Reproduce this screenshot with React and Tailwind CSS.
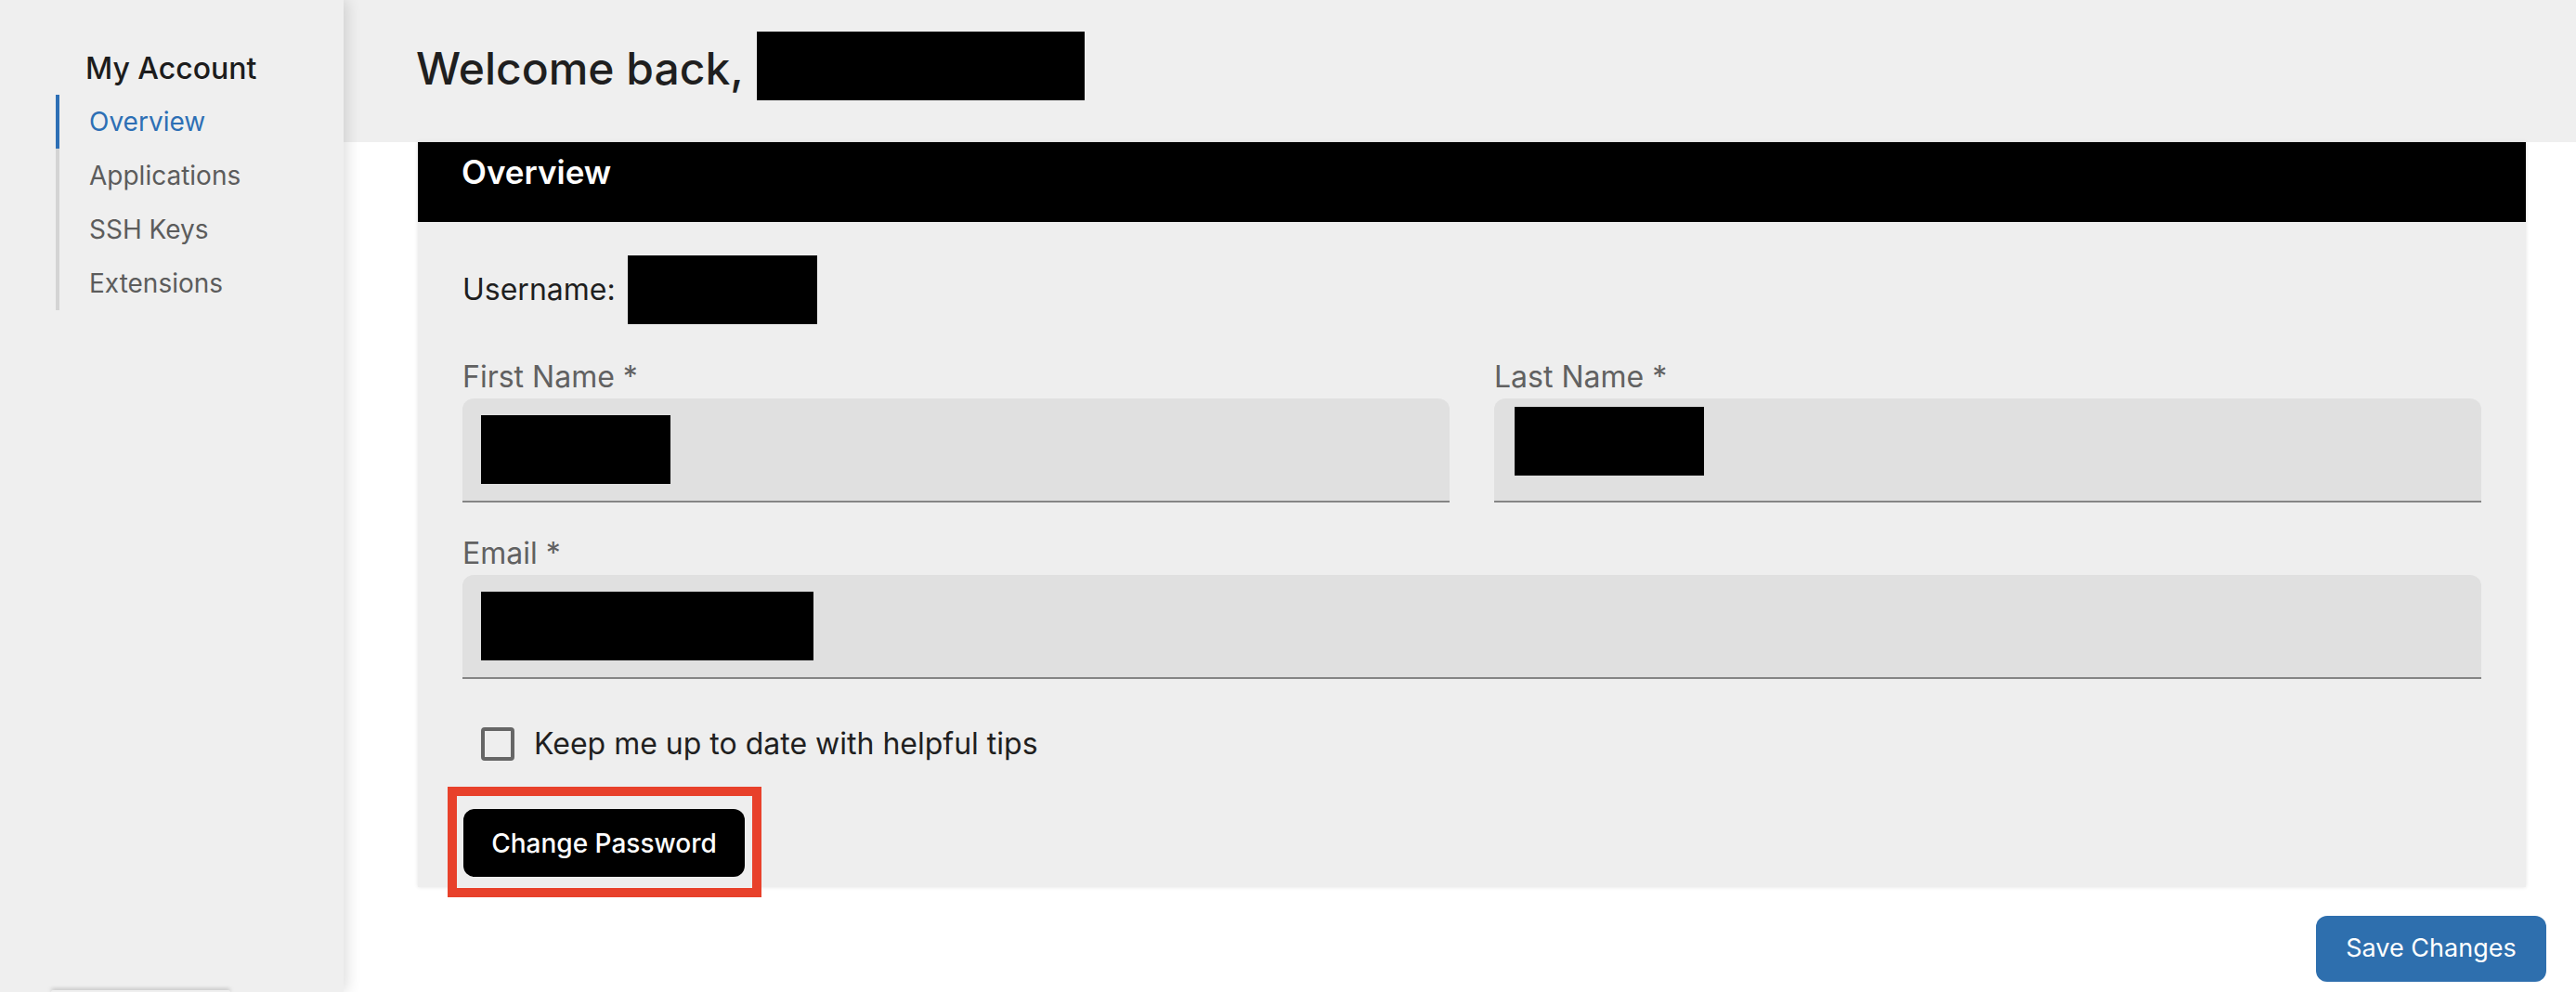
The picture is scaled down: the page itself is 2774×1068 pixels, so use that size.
export default function App() {
  const navItems = ['Overview', 'Applications', 'SSH Keys', 'Extensions'];

  return (
    <div className="flex min-h-screen bg-white font-['Inter',sans-serif]">
      {/* Sidebar */}
      <aside className="relative z-10 flex w-[370px] shrink-0 flex-col bg-[#efefef] pl-[60px] shadow-[4px_0_14px_rgba(0,0,0,0.13)]">
        <h2 className="mt-[54px] ml-[32px] text-[32px] font-medium leading-[40px] text-[#1c1c1c]">My Account</h2>
        <nav className="mt-[8px] flex flex-col border-l-4 border-[#d4d4d4]">
          {navItems.map((item, i) => (
            <a
              key={item}
              className={`flex h-[58px] items-center text-[28px] leading-[34px] ${
                i === 0
                  ? '-ml-[4px] border-l-4 border-[#2d6fb5] pl-[32px] text-[#2d6fb5]'
                  : 'pl-[32px] text-[#5c5c5c]'
              }`}
            >
              {item}
            </a>
          ))}
        </nav>
        <div className="flex-1" />
        <div className="-ml-[5px] h-[2px] w-[193px] rounded-t bg-[#efefef] shadow-[0_-1px_4px_rgba(0,0,0,0.35)]" />
      </aside>

      {/* Main */}
      <main className="flex flex-1 flex-col">
        <header className="h-[153px] bg-[#efefef] pl-[78px]">
          <div className="flex items-start pt-[34px]">
            <h1 className="mt-[11px] text-[48px] font-medium leading-[58px] text-[#1f1f1f]">Welcome back,</h1>
            <div className="ml-[14px] h-[74px] w-[353px] bg-black" />
          </div>
        </header>

        <section className="ml-[80px] mr-[54px] bg-[#eeeeee] shadow-[0_0_4px_rgba(0,0,0,0.12)]">
          <div className="h-[86px] bg-black pl-[47px] pt-[10px]">
            <h2 className="text-[35px] font-semibold leading-[44px] text-white">Overview</h2>
          </div>

          <div className="px-[48px] pt-[36px] pb-[11px]">
            <div className="flex h-[74px] items-center">
              <span className="text-[32px] leading-[38px] text-[#1f1f1f]">Username: </span>
              <div className="ml-[13px] h-[74px] w-[204px] bg-black" />
            </div>

            <div className="mt-[38px] grid grid-cols-2 gap-x-[48px]">
              <div>
                <label className="block text-[32px] leading-[38px] text-[#616161]">First Name *</label>
                <div className="mt-[4px] flex h-[112px] items-center rounded-t-[12px] border-b-2 border-[#858585] bg-[#e0e0e0] pl-[20px]">
                  <div className="h-[74px] w-[204px] bg-black" />
                </div>
              </div>
              <div>
                <label className="block text-[32px] leading-[38px] text-[#616161]">Last Name *</label>
                <div className="mt-[4px] flex h-[112px] items-start rounded-t-[12px] border-b-2 border-[#858585] bg-[#e0e0e0] pl-[22px] pt-[9px]">
                  <div className="h-[74px] w-[204px] bg-black" />
                </div>
              </div>
            </div>

            <div className="mt-[36px]">
              <label className="block text-[32px] leading-[38px] text-[#616161]">Email *</label>
              <div className="mt-[4px] flex h-[112px] items-center rounded-t-[12px] border-b-2 border-[#858585] bg-[#e0e0e0] pl-[20px]">
                <div className="h-[74px] w-[358px] bg-black" />
              </div>
            </div>

            <label className="mt-[46px] flex h-[48px] items-center pl-[20px]">
              <span className="h-[36px] w-[36px] rounded-[4px] border-4 border-[#666666]" />
              <span className="ml-[21px] text-[32px] leading-[38px] text-[#1f1f1f]">Keep me up to date with helpful tips</span>
            </label>

            <div className="relative mt-[46px] ml-[1px] w-fit">
              <button className="h-[73px] w-[303px] rounded-[12px] bg-black text-[28px] font-medium text-white">
                Change Password
              </button>
              <div className="pointer-events-none absolute -top-[24px] -left-[17px] h-[119px] w-[338px] border-[10px] border-[#e8412b]" />
            </div>
          </div>
        </section>

        <div className="mt-[31px] flex justify-end pr-[32px]">
          <button className="h-[71px] w-[248px] rounded-[12px] bg-[#2e6fae] text-[27px] text-white">
            Save Changes
          </button>
        </div>
      </main>
    </div>
  );
}
